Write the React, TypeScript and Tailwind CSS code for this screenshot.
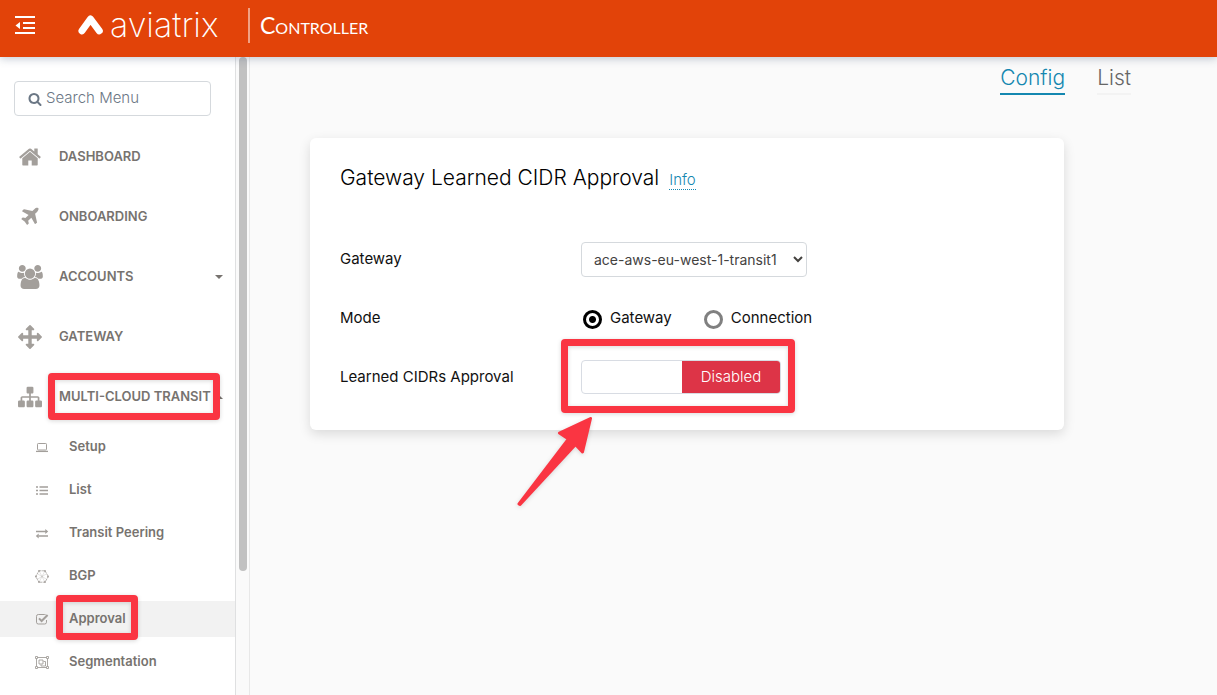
import { useState, type ReactNode } from "react";

const SOLID_ICONS = {
  search:
    "M1216 832q0-185-131.5-316.5t-316.5-131.5-316.5 131.5-131.5 316.5 131.5 316.5 316.5 131.5 316.5-131.5 131.5-316.5zm512 832q0 52-38 90t-90 38q-54 0-90-38l-343-342q-179 124-399 124-143 0-273.5-55.5t-225-150-150-225-55.5-273.5 55.5-273.5 150-225 225-150 273.5-55.5 273.5 55.5 225 150 150 225 55.5 273.5q0 220-124 399l343 343q37 37 37 90z",
  home: "M1472 992v480q0 26-19 45t-45 19h-384v-384h-256v384h-384q-26 0-45-19t-19-45v-480q0-1 .5-3t.5-3l575-474 575 474q1 2 1 6zm223-69l-62 74q-8 9-21 11h-3q-13 0-21-7l-692-577-692 577q-12 8-24 7-13-2-21-11l-62-74q-8-10-7-23.5t11-21.5l719-599q32-26 76-26t76 26l244 204v-195q0-14 9-23t23-9h192q14 0 23 9t9 23v408l219 182q10 8 11 21.5t-7 23.5z",
  plane:
    "M1568 160q44 52 12 148t-108 172l-161 161 160 696q5 19-12 33l-128 96q-7 6-19 6-4 0-7-1-15-3-21-16l-279-508-259 259 53 194q5 17-8 31l-96 96q-9 9-23 9h-2q-15-2-24-13l-189-252-252-189q-11-7-13-23-1-13 9-25l96-97q9-9 23-9 6 0 8 1l194 53 259-259-508-279q-14-8-17-24-2-16 9-27l128-128q14-13 30-8l665 159 160-160q76-76 172-108t148 12z",
  users:
    "M593 896q-162 5-265 128h-134q-82 0-138-40.5t-56-118.5q0-353 124-353 6 0 43.5 21t97.5 42.5 119 21.5q67 0 133-23-5 37-5 66 0 139 81 256zm1071 637q0 120-73 189.5t-194 69.5h-874q-121 0-194-69.5t-73-189.5q0-53 3.5-103.5t14-109 26.5-108.5 43-97.5 62-81 85.5-53.5 111.5-20q10 0 43 21.5t73 48 107 48 135 21.5 135-21.5 107-48 73-48 43-21.5q61 0 111.5 20t85.5 53.5 62 81 43 97.5 26.5 108.5 14 109 3.5 103.5zm-1024-1277q0 106-75 181t-181 75-181-75-75-181 75-181 181-75 181 75 75 181zm704 384q0 159-112.5 271.5t-271.5 112.5-271.5-112.5-112.5-271.5 112.5-271.5 271.5-112.5 271.5 112.5 112.5 271.5zm576 225q0 78-56 118.5t-138 40.5h-134q-103-123-265-128 81-117 81-256 0-29-5-66 66 23 133 23 59 0 119-21.5t97.5-42.5 43.5-21q124 0 124 353zm-128-609q0 106-75 181t-181 75-181-75-75-181 75-181 181-75 181 75 75 181z",
  arrows:
    "M1792 896q0 26-19 45l-256 256q-19 19-45 19t-45-19-19-45v-128h-384v384h128q26 0 45 19t19 45-19 45l-256 256q-19 19-45 19t-45-19l-256-256q-19-19-19-45t19-45 45-19h128v-384h-384v128q0 26-19 45t-45 19-45-19l-256-256q-19-19-19-45t19-45l256-256q19-19 45-19t45 19 19 45v128h384v-384h-128q-26 0-45-19t-19-45 19-45l256-256q19-19 45-19t45 19l256 256q19 19 19 45t-19 45-45 19h-128v384h384v-128q0-26 19-45t45-19 45 19l256 256q19 19 19 45z",
  sitemap:
    "M1792 1248v320q0 40-28 68t-68 28h-320q-40 0-68-28t-28-68v-320q0-40 28-68t68-28h96v-192h-512v192h96q40 0 68 28t28 68v320q0 40-28 68t-68 28h-320q-40 0-68-28t-28-68v-320q0-40 28-68t68-28h96v-192h-512v192h96q40 0 68 28t28 68v320q0 40-28 68t-68 28h-320q-40 0-68-28t-28-68v-320q0-40 28-68t68-28h96v-192q0-52 38-90t90-38h512v-192h-96q-40 0-68-28t-28-68v-320q0-40 28-68t68-28h320q40 0 68 28t28 68v320q0 40-28 68t-68 28h-96v192h512q52 0 90 38t38 90v192h96q40 0 68 28t28 68z",
};

function SolidIcon({ name, className }: { name: keyof typeof SOLID_ICONS; className: string }) {
  return (
    <svg
      aria-hidden="true"
      viewBox={name === "users" ? "0 0 1920 1792" : "0 0 1792 1792"}
      className={className}
      fill="currentColor"
    >
      <path d={SOLID_ICONS[name]} />
    </svg>
  );
}

function SmallIcon({ children }: { children: ReactNode }) {
  return (
    <svg
      aria-hidden="true"
      viewBox="0 0 14 14"
      className="size-3.5 shrink-0 text-[#a39f9b]"
      fill="none"
      stroke="currentColor"
      strokeWidth="1"
    >
      {children}
    </svg>
  );
}

const LaptopIcon = (
  <SmallIcon>
    <rect x="2.5" y="3.5" width="9" height="6.5" rx="0.8" />
    <path d="M1 11.4h12" strokeWidth="1.3" />
  </SmallIcon>
);

const ListIcon = (
  <SmallIcon>
    <path d="M4.5 4H13M4.5 7.500H13M4.5 11H13M1 4h2M1 7.500h2M1 11h2" strokeWidth="1.5" />
  </SmallIcon>
);

const ExchangeIcon = (
  <SmallIcon>
    <path d="M1 5.500h10M3.5 10H13" strokeWidth="1.5" />
    <path d="M10.3 3.1 13.2 5.500l-2.9 2.4zM3.7 7.6.8 10l2.9 2.4z" fill="currentColor" stroke="none" />
  </SmallIcon>
);

const HexMeshIcon = (
  <SmallIcon>
    <path d="M4 1.800h6L13.300 7.500 10 13.200H4L.7 7.500z" strokeWidth="0.8" strokeDasharray="2.500 0.6" />
    <path d="M4 1.800l6 11.400M10 1.800 4 13.200M2.300 4.700l9.400 5.600M11.700 4.700 2.300 10.300" strokeWidth="0.3" />
    <g fill="currentColor" stroke="none">
      <circle cx="4" cy="1.900" r="0.9" />
      <circle cx="10" cy="1.900" r="0.9" />
      <circle cx="13" cy="7.500" r="0.9" />
      <circle cx="10" cy="13" r="0.9" />
      <circle cx="4" cy="13" r="0.9" />
      <circle cx="1" cy="7.500" r="0.9" />
    </g>
  </SmallIcon>
);

const CheckSquareIcon = (
  <SmallIcon>
    <path d="M11.5 8v2.2a1.8 1.8 0 0 1-1.8 1.8H3.3a1.8 1.8 0 0 1-1.8-1.8V4.3a1.8 1.8 0 0 1 1.8-1.8h6.4q.6 0 1 .3" />
    <path d="m4 6.4 2.6 2.6 6-6" strokeWidth="2" />
  </SmallIcon>
);

const ObjectGroupIcon = (
  <SmallIcon>
    <path d="M1.500 2.500h11v10h-11z" strokeWidth="0.9" />
    <path d="M4 5h4v4H4zM8.500 6.500h2V11H6V9.500" strokeWidth="0.9" />
    <path
      d="M.5 1.500h2v2h-2zM11.500 1.500h2v2h-2zM.5 11.500h2v2h-2zM11.500 11.500h2v2h-2z"
      fill="white"
      strokeWidth="0.9"
    />
  </SmallIcon>
);

const CARET_DOWN = "M0 0h8L4 4z";
const CARET_UP = "M0 4h8L4 0z";

type MenuEntry = { label: string; icon: keyof typeof SOLID_ICONS; caret?: string; boxed?: boolean };

const MENU: MenuEntry[] = [
  { label: "DASHBOARD", icon: "home" },
  { label: "ONBOARDING", icon: "plane" },
  { label: "ACCOUNTS", icon: "users", caret: CARET_DOWN },
  { label: "GATEWAY", icon: "arrows" },
  { label: "MULTI-CLOUD TRANSIT", icon: "sitemap", caret: CARET_UP, boxed: true },
];

const SUBMENU: { label: string; icon: ReactNode; active?: boolean }[] = [
  { label: "Setup", icon: LaptopIcon },
  { label: "List", icon: ListIcon },
  { label: "Transit Peering", icon: ExchangeIcon },
  { label: "BGP", icon: HexMeshIcon },
  { label: "Approval", icon: CheckSquareIcon, active: true },
  { label: "Segmentation", icon: ObjectGroupIcon },
];

function Highlight({ className }: { className: string }) {
  return (
    <span
      aria-hidden="true"
      className={`pointer-events-none absolute rounded-sm border-[#fa3542] drop-shadow-sm ${className}`}
    />
  );
}

function Header() {
  return (
    <header className="relative z-10 flex h-[57px] shrink-0 items-start bg-[#e24309] text-white shadow-[0_2px_8px_rgba(70,90,120,0.3)]">
      <button type="button" aria-label="Collapse menu" className="ml-[15px] mt-4">
        <svg aria-hidden="true" viewBox="0 0 20 18" className="h-[18px] w-5" fill="none" stroke="currentColor" strokeWidth="2">
          <path d="M0 1h20M8 7h12M8 12h12M0 17h20" />
          <path d="M5 6v7L.5 9.500z" fill="currentColor" stroke="none" />
        </svg>
      </button>
      <a href="#home" className="ml-[43px] flex h-[50px] items-center">
        <svg aria-hidden="true" viewBox="0 0 26 20" className="h-5 w-[26px]" fill="none">
          <path d="M4 15.800 12.500 4l8.800 11.800" stroke="currentColor" strokeWidth="7" strokeLinecap="round" strokeLinejoin="round" />
        </svg>
        <span className="ml-1.5 w-[138px] text-[34px] font-extralight leading-[46px]">aviatrix</span>
        <span className="h-[35px] w-0.5 bg-white/50" />
        <span className="ml-2.5 font-['Lato'] text-[23px] leading-[50px] [font-variant:small-caps]">Controller</span>
      </a>
    </header>
  );
}

function Sidebar() {
  return (
    <aside className="flex shrink-0">
      <div className="w-[236px] overflow-hidden border-r border-[#dfe0e1] bg-white pt-6">
        <label className="mx-3.5 flex h-[35px] w-[197px] items-center gap-1 rounded border border-[#d5d9dd] px-3 text-[#6b7785]">
          <SolidIcon name="search" className="ml-px size-3.5 shrink-0" />
          <input
            type="search"
            aria-label="Search Menu"
            placeholder="Search Menu"
            className="w-full min-w-0 bg-transparent text-[15px] font-light outline-none placeholder:text-[#6b7785]"
          />
        </label>
        <nav aria-label="Main" className="mt-[11px] text-[13px] font-semibold text-[#77736f]">
          <ul>
            {MENU.map(({ label, icon, caret, boxed }) => (
              <li key={label} className="relative">
                <a href={`#${label.toLowerCase()}`} className="flex h-[60px] items-center pl-4 pr-3">
                  <span className="flex w-7 justify-center text-[#a39f9b]">
                    <SolidIcon
                      name={icon}
                      className={
                        icon === "users" ? "h-6 w-[26px]" : icon === "plane" ? "size-[22px]" : "size-6"
                      }
                    />
                  </span>
                  <span className="ml-[15px] flex-1 whitespace-nowrap">{label}</span>
                  {caret && (
                    <svg aria-hidden="true" viewBox="0 0 8 4" className="h-1 w-2" fill="currentColor">
                      <path d={caret} />
                    </svg>
                  )}
                </a>
                {boxed && <Highlight className="left-12 top-1.5 h-[47px] w-[172px] border-[7px]" />}
              </li>
            ))}
          </ul>
          <ul className="mt-0.5 flex flex-col gap-[7px]">
            {SUBMENU.map(({ label, icon, active }) => (
              <li key={label} className="relative">
                <a
                  href={`#${label.toLowerCase().replace(" ", "-")}`}
                  aria-current={active ? "page" : undefined}
                  className={`flex h-9 items-center pl-[35px] ${active ? "bg-[#f2f2f2]" : ""}`}
                >
                  {icon}
                  <span className="ml-5">{label}</span>
                </a>
                {active && <Highlight className="-top-1.5 left-14 h-[45px] w-[82px] border-[7px]" />}
              </li>
            ))}
          </ul>
        </nav>
      </div>
      <div aria-hidden="true" className="w-3.5 border-r border-[#e8e8e8] bg-[#fafafa] px-[3px]">
        <div className="h-[514px] w-2 rounded-full bg-[#c1c1c1]" />
      </div>
    </aside>
  );
}

function ModeRadio({ label, checked, onSelect }: { label: string; checked: boolean; onSelect: () => void }) {
  return (
    <label className="flex items-center gap-2">
      <input
        type="radio"
        name="mode"
        checked={checked}
        onChange={onSelect}
        className="mt-0.5 size-[19px] appearance-none rounded-full border-3 border-[#808080] checked:border-black checked:bg-[radial-gradient(circle,#000_3px,transparent_4px)]"
      />
      {label}
    </label>
  );
}

function ApprovalCard() {
  const [mode, setMode] = useState("Gateway");
  const [enabled, setEnabled] = useState(false);
  return (
    <section className="ml-[60px] mr-[153px] mt-[43px] rounded-md bg-white px-[30px] pb-9 pt-[25px] text-[15px] text-[#111] shadow-[0_4px_12px_rgba(0,0,0,0.13)]">
      <h1 className="flex items-baseline gap-2.5 text-[21px] font-light leading-[30px] text-black">
        Gateway Learned CIDR Approval
        <a href="#info" className="border-b border-dotted border-[#1487b0] text-[15px] leading-[18px] text-[#1487b0]">
          Info
        </a>
      </h1>
      <div className="mt-[49px] grid grid-cols-[241px_1fr] items-center gap-y-6">
        <label htmlFor="gateway">Gateway</label>
        <select
          id="gateway"
          className="h-[35px] w-[226px] rounded border border-[#d5d9dd] bg-white pl-2 text-sm text-[#44423f]"
        >
          <option>ace-aws-eu-west-1-transit1</option>
        </select>
        <span id="mode-label">Mode</span>
        <div role="radiogroup" aria-labelledby="mode-label" className="flex h-[35px] items-center gap-8 pl-0.5">
          {["Gateway", "Connection"].map((name) => (
            <ModeRadio key={name} label={name} checked={mode === name} onSelect={() => setMode(name)} />
          ))}
        </div>
        <span id="approval-label">Learned CIDRs Approval</span>
        <div className="relative w-[200px]">
          <button
            type="button"
            role="switch"
            aria-checked={enabled}
            aria-labelledby="approval-label"
            onClick={() => setEnabled(!enabled)}
            className="flex h-[34px] w-full overflow-hidden rounded border border-[#d8dce3] leading-8"
          >
            <span className={`w-[100px] ${enabled ? "bg-[#28a745] text-white" : ""}`}>{enabled ? "Enabled" : ""}</span>
            <span className={`h-full flex-1 font-light ${enabled ? "" : "bg-[#dd3447] text-white"}`}>
              {enabled ? "" : "Disabled"}
            </span>
          </button>
          <Highlight className="-left-5 -top-[21px] h-[74px] w-[234px] border-[7px]" />
          <svg
            aria-hidden="true"
            viewBox="0 0 80 94"
            className="pointer-events-none absolute -left-16 top-[55px] h-[94px] w-20 text-[#fa3542] drop-shadow-sm"
            fill="currentColor"
            stroke="currentColor"
            strokeWidth="3"
            strokeLinejoin="round"
          >
            <path d="M73.500 3.500 42.500 18l9 6L2 89l1 .5L58.500 29.500l7 7.500z" />
          </svg>
        </div>
      </div>
    </section>
  );
}

export default function App() {
  return (
    <div className="flex h-screen flex-col overflow-hidden bg-[#fafafa] font-['Inter',sans-serif]">
      <Header />
      <div className="flex min-h-0 flex-1">
        <Sidebar />
        <main className="min-w-0 flex-1">
          <nav aria-label="Views" className="mr-[86px] flex justify-end gap-8 pt-1.5 text-[21px] font-light leading-[30px]">
            <a href="#config" aria-current="page" className="border-b-2 border-[#1487b0] text-[#1487b0]">
              Config
            </a>
            <a href="#list" className="border-b-2 border-[#f3f3f3] text-[#666]">
              List
            </a>
          </nav>
          <ApprovalCard />
        </main>
      </div>
    </div>
  );
}
